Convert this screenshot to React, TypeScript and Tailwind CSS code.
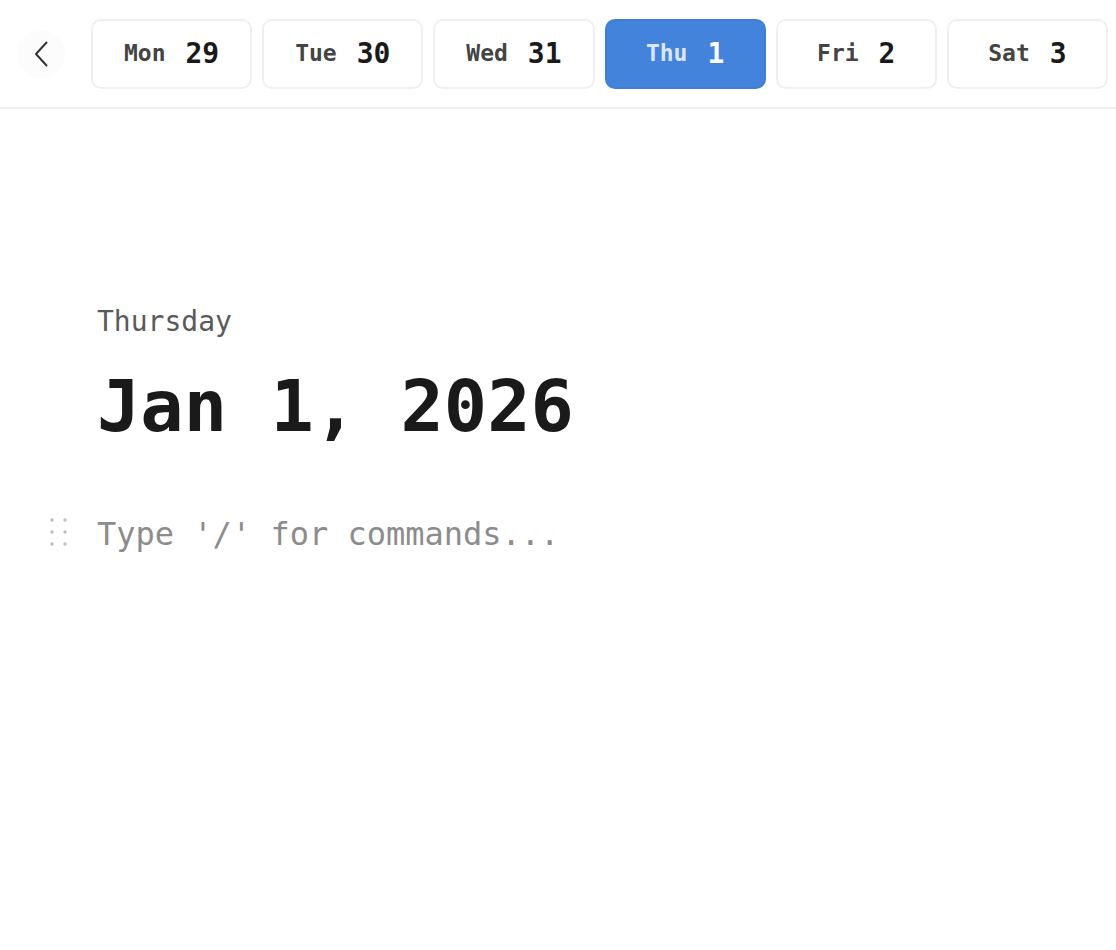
const days = [
    { name: 'Mon', num: 29 },
    { name: 'Tue', num: 30 },
    { name: 'Wed', num: 31 },
    { name: 'Thu', num: 1, active: true },
    { name: 'Fri', num: 2 },
    { name: 'Sat', num: 3 },
];

const mono = { fontFamily: '"DejaVu Sans Mono", "Liberation Mono", monospace' };

function DragHandle() {
    return (
        <svg width="20" height="32" viewBox="0 0 20 32" className="shrink-0 mt-[3px]">
            {[3, 15, 27].map((cy) => (
                <g key={cy} fill="#bdbdbd">
                    <circle cx="4" cy={cy} r="1.7" />
                    <circle cx="17" cy={cy} r="1.7" />
                </g>
            ))}
        </svg>
    );
}

export default function App() {
    return (
        <div className="min-h-screen bg-white" style={mono}>
            {/* week strip */}
            <div className="h-[109px] flex items-center border-b-2 border-[#f0f0f0] pl-[17px] pr-[8px]">
                <button type="button" className="w-[48px] h-[48px] shrink-0 rounded-full bg-[#fcfcfc] flex items-center justify-center text-[#333]">
                    <svg width="14" height="26" viewBox="0 0 14 26" fill="none">
                        <path d="M12.5 1.5L2 13l10.5 11.5" stroke="currentColor" strokeWidth="2" strokeLinecap="round" strokeLinejoin="round" />
                    </svg>
                </button>
                <div className="ml-[26px] flex-1 flex gap-[10px]">
                    {days.map((d) => (
                        <button
                            key={d.name}
                            type="button"
                            className={
                                d.active
                                    ? 'flex-1 h-[70px] rounded-[10px] border-2 border-[#3f7fd8] bg-[#4483db] flex items-center justify-center gap-[20px]'
                                    : 'flex-1 h-[70px] rounded-[10px] border-2 border-[#efefef] bg-white flex items-center justify-center gap-[20px]'
                            }
                        >
                            <span className={d.active ? 'text-[23px] font-bold text-[#dbe7f8]' : 'text-[23px] font-bold text-[#444]'}>
                                {d.name}
                            </span>
                            <span className={d.active ? 'text-[28px] font-bold text-white' : 'text-[28px] font-bold text-[#1a1a1a]'}>
                                {d.num}
                            </span>
                        </button>
                    ))}
                </div>
            </div>

            {/* day page */}
            <div className="pl-[97px] pt-[195px]">
                <p className="text-[28px] leading-[36px] font-medium text-[#5a5a5a]">Thursday</p>
                <h1 className="mt-[26px] text-[72px] leading-[80px] font-bold text-[#1a1a1a]">Jan 1, 2026</h1>
                <div className="mt-[68px] -ml-[49px] flex gap-[29px]">
                    <DragHandle />
                    <p className="text-[32px] leading-[40px] text-[#8c8c8c]">Type '/' for commands...</p>
                </div>
            </div>
        </div>
    );
}
